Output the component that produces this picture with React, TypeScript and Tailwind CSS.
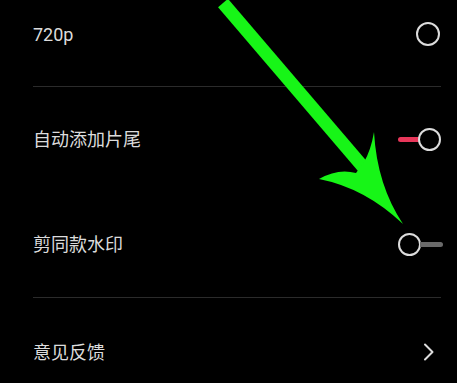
import type { FunctionComponent } from "react";

const Radio: FunctionComponent = () => (
  <div className="w-6 h-6 rounded-full border-2 border-[#dcdcdc]" />
);

const Toggle: FunctionComponent<{ on: boolean }> = ({ on }) =>
  on ? (
    <div className="flex items-center">
      <div className="w-[21px] h-[5px] rounded-l-full bg-[#e8375a] -mr-[1px]" />
      <div className="w-[23px] h-[23px] rounded-full border-2 border-[#dcdcdc] bg-black" />
    </div>
  ) : (
    <div className="flex items-center -mr-[2px]">
      <div className="w-[23px] h-[23px] rounded-full border-2 border-[#dcdcdc] bg-black" />
      <div className="w-[23px] h-[5px] rounded-r-full bg-[#6a6a6a] -ml-[1px]" />
    </div>
  );

const Chevron: FunctionComponent = () => (
  <svg className="w-[12px] h-[18px] mr-[6px]" viewBox="0 0 12 18" fill="none">
    <path d="M2 1.5 L9.5 9 L2 16.5" stroke="#dcdcdc" strokeWidth="2" strokeLinecap="round" strokeLinejoin="round" />
  </svg>
);

const Divider: FunctionComponent = () => <div className="h-px bg-[#2b2b2b]" />;

const App: FunctionComponent = () => {
  return (
    <div
      className="relative w-[457px] h-[383px] overflow-hidden bg-black text-[#dcdcdc] text-[18px]"
      style={{ fontFamily: 'Roboto, "Noto Sans CJK SC", sans-serif' }}
    >
      <div className="pl-[33px] pr-[16px]">
        {/* 720p */}
        <div className="h-[86px] pb-[18px] flex items-center justify-between">
          <span>720p</span>
          <div className="mr-[1px]">
            <Radio />
          </div>
        </div>
        <Divider />

        {/* 自动添加片尾 */}
        <div className="h-[105px] flex items-center justify-between">
          <span>自动添加片尾</span>
          <Toggle on />
        </div>

        {/* 剪同款水印 */}
        <div className="h-[105px] flex items-center justify-between">
          <span>剪同款水印</span>
          <Toggle on={false} />
        </div>
        <Divider />

        {/* 意见反馈 */}
        <div className="h-[108px] flex items-center justify-between">
          <span>意见反馈</span>
          <Chevron />
        </div>
      </div>

      {/* green arrow */}
      <svg className="absolute inset-0 w-[457px] h-[383px] pointer-events-none" viewBox="0 0 457 383">
        <line x1="223" y1="3" x2="364" y2="168" stroke="#17f517" strokeWidth="13" />
        <path
          d="M 364 162 Q 371 150 374 132 Q 377 185 403 224 Q 365 188 319 179 Q 338 168 356 173 Z"
          fill="#17f517"
        />
      </svg>
    </div>
  );
};

export default App;
